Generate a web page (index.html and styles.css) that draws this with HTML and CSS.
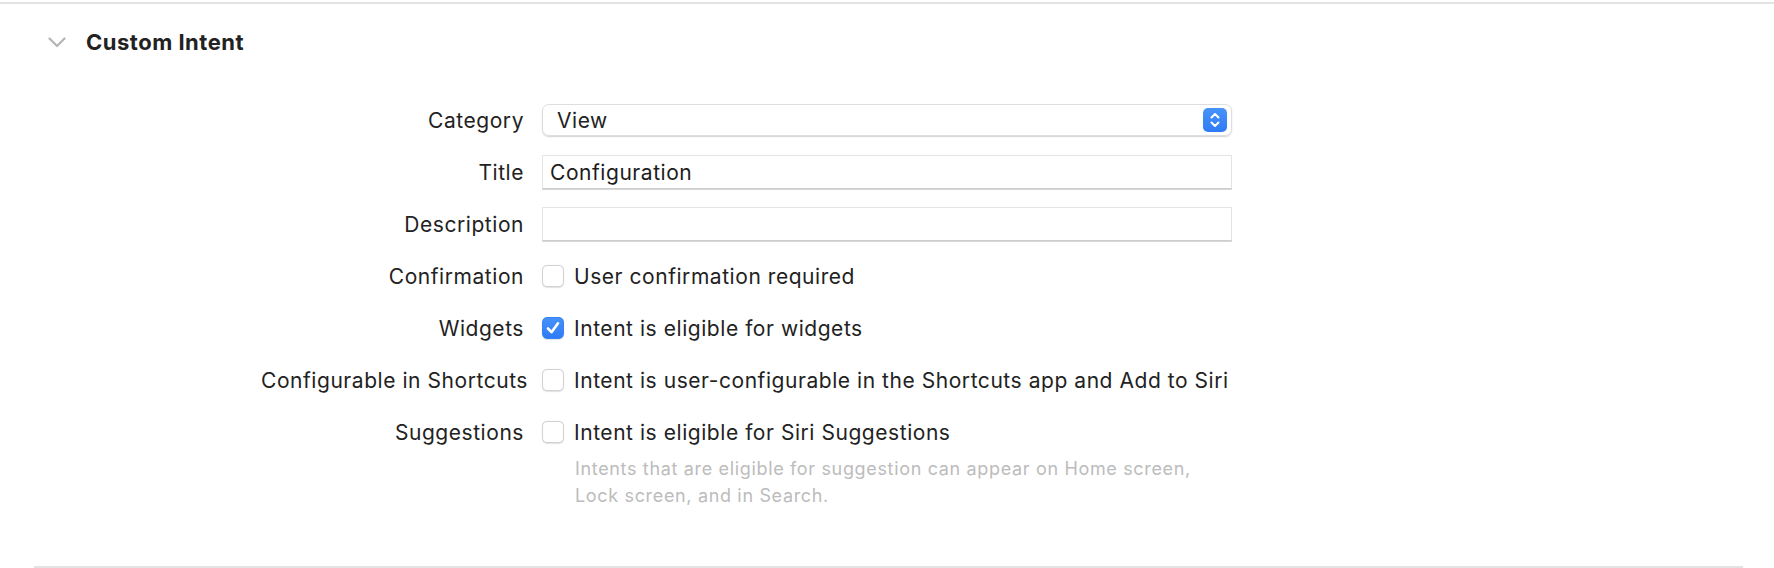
FILE: index.html
```html
<!DOCTYPE html>
<html lang="en">
<head>
  <meta charset="UTF-8">
  <title>Custom Intent</title>
  <link rel="stylesheet" href="styles.css">
</head>
<body>
  <div class="topline"></div>
  <div class="section">
    <div class="section-head">
      <svg class="chevron" width="18" height="11" viewBox="0 0 18 11">
        <path d="M1.5 1.5 L9 9 L16.5 1.5" fill="none" stroke="#b5b5b5" stroke-width="2.2" stroke-linecap="round" stroke-linejoin="round"/>
      </svg>
      <h2>Custom Intent</h2>
    </div>

    <div class="form">
      <label class="key">Category</label>
      <div class="popup">
        <span>View</span>
        <span class="stepper">
          <svg width="12" height="18" viewBox="0 0 12 18">
            <path d="M2.5 6.5 L6 3 L9.5 6.5 M2.5 11.5 L6 15 L9.5 11.5" fill="none" stroke="#fff" stroke-width="2" stroke-linecap="round" stroke-linejoin="round"/>
          </svg>
        </span>
      </div>

      <label class="key" for="title">Title</label>
      <input class="field" id="title" type="text" value="Configuration">

      <label class="key" for="desc">Description</label>
      <input class="field" id="desc" type="text" value="">

      <span class="key">Confirmation</span>
      <div class="check"><span class="box"></span>User confirmation required</div>

      <span class="key">Widgets</span>
      <div class="check">
        <span class="box on">
          <svg width="18" height="18" viewBox="0 0 18 18">
            <path d="M4 9.5 L7.5 13.2 L14 4.3" fill="none" stroke="#fff" stroke-width="2.6" stroke-linecap="round" stroke-linejoin="round"/>
          </svg>
        </span>Intent is eligible for widgets
      </div>

      <span class="key wide">Configurable in Shortcuts</span>
      <div class="check"><span class="box"></span>Intent is user-configurable in the Shortcuts app and Add to Siri</div>

      <span class="key">Suggestions</span>
      <div class="check"><span class="box"></span>Intent is eligible for Siri Suggestions</div>

      <p class="help">Intents that are eligible for suggestion can appear on Home screen,<br>Lock screen, and in Search.</p>
    </div>
  </div>
  <div class="bottomline"></div>
</body>
</html>
```

FILE: styles.css
```css
* {
  margin: 0;
  padding: 0;
  box-sizing: border-box;
}
body {
  font-family: "Inter", "Noto Sans", sans-serif;
  font-size: 21px;
  letter-spacing: 0.55px;
  color: #222;
  background: #fff;
  width: 1774px;
  height: 568px;
  overflow: hidden;
}
.topline {
  margin-top: 2px;
  height: 2px;
  background: #e3e3e3;
}
.section-head {
  display: flex;
  align-items: center;
  height: 36px;
  margin-top: 20px;
  padding-left: 48px;
}
.chevron {
  margin-right: 20px;
}
.section-head h2 {
  font-size: 22px;
  font-weight: 700;
  letter-spacing: 0.5px;
  color: #222;
}
.form {
  display: grid;
  grid-template-columns: 524px 690px;
  grid-template-rows: repeat(7, 34px) auto;
  column-gap: 18px;
  row-gap: 18px;
  margin-top: 43px;
  align-items: center;
}
.key {
  text-align: right;
  white-space: nowrap;
}
.key.wide {
  margin-right: -4px;
}
.popup {
  height: 32px;
  display: flex;
  align-items: center;
  justify-content: space-between;
  padding: 0 4px 0 14px;
  border: 1px solid #dedede;
  border-radius: 7px;
  box-shadow: 0 1px 1.5px rgba(0, 0, 0, 0.18);
}
.stepper {
  width: 24px;
  height: 24px;
  border-radius: 5px;
  background: linear-gradient(#4793fa, #2f7bf5);
  display: flex;
  align-items: center;
  justify-content: center;
}
.field {
  height: 34px;
  width: 100%;
  border: 1px solid #e4e4e4;
  border-bottom-color: #cdcdcd;
  box-shadow: 0 1px 0 #d8d8d8;
  font: inherit;
  letter-spacing: inherit;
  color: #1c1c1c;
  padding: 0 7px;
  outline: none;
}
.check {
  display: flex;
  align-items: center;
  gap: 10px;
  white-space: nowrap;
}
.box {
  width: 22px;
  height: 22px;
  flex: none;
  border: 1px solid #d2d2d2;
  border-radius: 5px;
  background: #fff;
  box-shadow: 0 0.5px 1px rgba(0, 0, 0, 0.12);
  display: flex;
  align-items: center;
  justify-content: center;
}
.box.on {
  border-color: #3583f6;
  background: linear-gradient(#4592fa, #2f7bf5);
}
.help {
  grid-column: 2;
  align-self: start;
  margin-top: -12px;
  padding-left: 33px;
  font-size: 18px;
  letter-spacing: 0.66px;
  line-height: 27px;
  color: #bcbcbc;
}
.bottomline {
  margin: 57px 31px 0 34px;
  height: 2px;
  background: #e3e3e3;
}
```
